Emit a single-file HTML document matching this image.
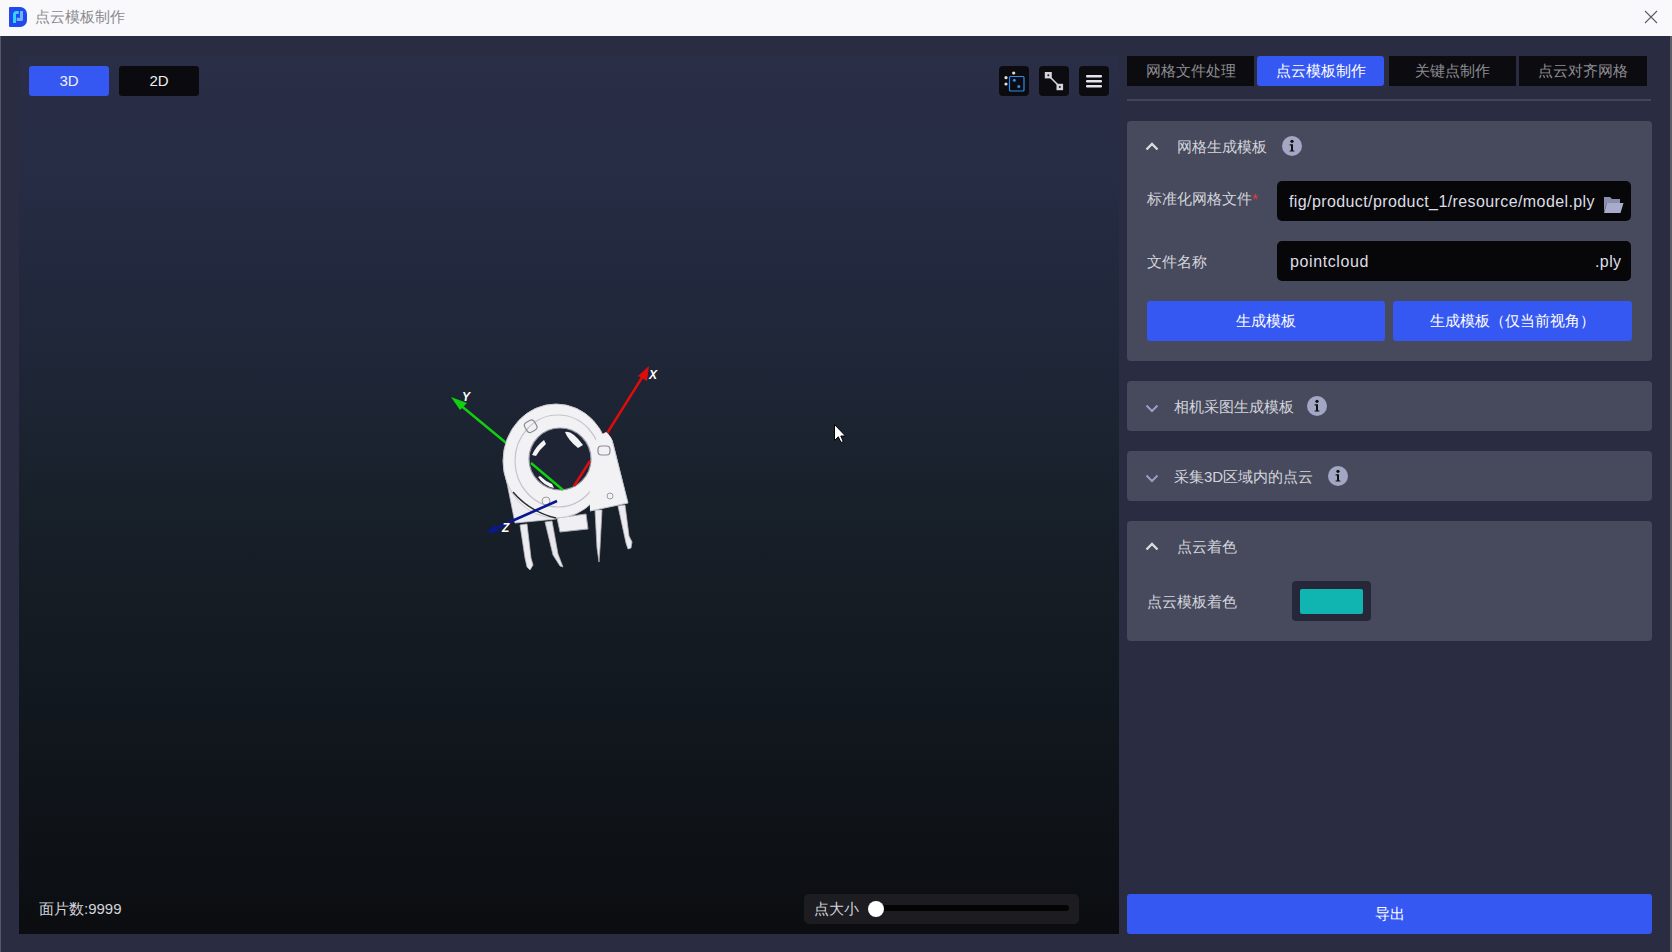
<!DOCTYPE html>
<html><head><meta charset="utf-8">
<style>
*{margin:0;padding:0;box-sizing:border-box}
html,body{width:1672px;height:952px;overflow:hidden;background:#2a2c42;font-family:"Liberation Sans",sans-serif;color:#d8d8dc}
.abs{position:absolute}
#title{left:0;top:0;width:1672px;height:36px;background:#f9f9fb}
#title .t{left:35px;top:7px;font-size:15px;color:#8a8a90;line-height:20px}
#rb{left:1670px;top:36px;width:2px;height:916px;background:#5c5f66}
#view{left:19px;top:56px;width:1100px;height:878px;background:linear-gradient(to bottom,#2a2e46 0%,#252c43 15%,#21283c 28%,#1c2432 42%,#18202a 50%,#151c24 62%,#12181f 73%,#0e1217 90%,#0b0d10 100%)}
#lb{left:0;top:36px;width:1px;height:916px;background:#55586a}
.btn{border-radius:3px;font-size:15px;text-align:center;line-height:30px;color:#f0f0f0}
.tool{width:30px;height:30px;border-radius:4px;background:#0b0b10}
.tab{top:56px;height:30px;background:#0c0c10;font-size:15px;line-height:30px;text-align:center;color:#8c8c94}
.card{left:1127px;width:525px;background:#474a5c;border-radius:4px}
.lbl{font-size:15px;color:#d4d5dc;line-height:20px;white-space:nowrap}
.inp{left:1277px;width:354px;height:40px;background:#07070a;border-radius:5px}
.itxt{font-size:16px;color:#dedee4;line-height:20px;white-space:nowrap;letter-spacing:0.4px}
.bb{background:#3658f2;color:#fff;font-size:15px;text-align:center;line-height:40px;border-radius:3px}
.info{width:20px;height:20px}
.chev{width:14px;height:9px}
</style></head><body>
<div id="title" class="abs">
  <svg class="abs" style="left:9px;top:7px" width="19" height="20" viewBox="0 0 19 20">
    <path d="M1 0H11A7 7 0 0 1 18 7V13A7 7 0 0 1 11 20H1A1 1 0 0 1 0 19V1A1 1 0 0 1 1 0Z" fill="#2248ee"/>
    <path d="M4 16V7.5A3.5 3.5 0 0 1 7.5 4H9.7V7H7V16Z" fill="#2ed2fa"/>
    <path d="M11 4H14V12.5A1.5 1.5 0 0 1 12.5 14H7.7V10.7H11Z" fill="#6ab6f2"/>
  </svg>
  <div class="t abs">点云模板制作</div>
  <svg class="abs" style="left:1644px;top:10px" width="14" height="14" viewBox="0 0 14 14"><path d="M1 1L13 13M13 1L1 13" stroke="#5a5a68" stroke-width="1.1"/></svg>
</div>
<div id="rb" class="abs"></div>
<div id="lb" class="abs"></div>
<div id="view" class="abs"></div>

<div class="abs btn" style="left:29px;top:66px;width:80px;height:30px;background:#3658f2">3D</div>
<div class="abs btn" style="left:119px;top:66px;width:80px;height:30px;background:#0b0b0f">2D</div>

<div class="abs tool" style="left:999px;top:66px">
  <svg width="30" height="30" viewBox="0 0 30 30">
    <circle cx="14.7" cy="7" r="1.6" fill="#e0e0d8"/>
    <circle cx="7" cy="11.7" r="1.6" fill="#e0e0d8"/>
    <circle cx="7" cy="18" r="1.6" fill="#e0e0d8"/>
    <rect x="10.5" y="10.5" width="14.5" height="14.5" rx="1" fill="none" stroke="#2a8ef2" stroke-width="1.2"/>
    <circle cx="15.3" cy="14.2" r="1.5" fill="#2a8ef2"/>
    <circle cx="19.8" cy="20.5" r="1.5" fill="#2a8ef2"/>
  </svg>
</div>
<div class="abs tool" style="left:1039px;top:66px">
  <svg width="30" height="30" viewBox="0 0 30 30">
    <line x1="9" y1="9" x2="21" y2="21" stroke="#d4d4dc" stroke-width="1.6"/>
    <rect x="5.8" y="6" width="7" height="6.4" fill="#d4d4dc"/>
    <rect x="17.5" y="17.8" width="6.6" height="6.4" fill="#d4d4dc"/>
    <circle cx="9.3" cy="9.2" r="1" fill="#222"/>
    <circle cx="20.8" cy="21" r="1" fill="#222"/>
  </svg>
</div>
<div class="abs tool" style="left:1079px;top:66px">
  <svg width="30" height="30" viewBox="0 0 30 30">
    <rect x="7" y="9" width="16" height="2.6" rx="1" fill="#e4e4ec"/>
    <rect x="7" y="14" width="16" height="2.6" rx="1" fill="#e4e4ec"/>
    <rect x="7" y="19" width="16" height="2.6" rx="1" fill="#e4e4ec"/>
  </svg>
</div>

<div class="abs tab" style="left:1127px;width:127px">网格文件处理</div>
<div class="abs tab" style="left:1257px;width:127px;background:#3658f2;color:#fff;border-radius:3px">点云模板制作</div>
<div class="abs tab" style="left:1389px;width:127px">关键点制作</div>
<div class="abs tab" style="left:1519px;width:128px">点云对齐网格</div>
<div class="abs" style="left:1127px;top:99px;width:524px;height:2px;background:#424757"></div>

<div class="abs card" style="top:121px;height:240px"></div>
<div class="abs card" style="top:381px;height:50px"></div>
<div class="abs card" style="top:451px;height:50px"></div>
<div class="abs card" style="top:521px;height:120px"></div>

<svg class="abs chev" style="left:1145px;top:142px" viewBox="0 0 14 9"><path d="M1.5 7.5L7 2L12.5 7.5" fill="none" stroke="#dcdce4" stroke-width="2.4"/></svg>
<div class="abs lbl" style="left:1177px;top:137px">网格生成模板</div>
<svg class="abs info" style="left:1282px;top:136px" viewBox="0 0 20 20"><circle cx="10" cy="10" r="10" fill="#a3a7c4"/><circle cx="10" cy="5.3" r="1.6" fill="#111"/><path d="M7.6 8.2H11V14.4H12.4V15.6H7.6V14.4H9V9.4H7.6Z" fill="#111"/></svg>

<div class="abs lbl" style="left:1147px;top:189px">标准化网格文件<span style="color:#e83b3b">*</span></div>
<div class="abs inp" style="top:181px"></div>
<div class="abs itxt" style="left:1289px;top:192px">fig/product/product_1/resource/model.ply</div>
<svg class="abs" style="left:1603px;top:195px" width="21" height="19" viewBox="0 0 21 19"><path d="M1 2H7L9 4H17V8H4L1 17Z" fill="#8c8fb0"/><path d="M4 8H20.5L17.5 18H1Z" fill="#a8abca"/></svg>

<div class="abs lbl" style="left:1147px;top:252px">文件名称</div>
<div class="abs inp" style="top:241px"></div>
<div class="abs itxt" style="left:1290px;top:252px;letter-spacing:0.6px">pointcloud</div>
<div class="abs itxt" style="left:1595px;top:252px">.ply</div>

<div class="abs bb" style="left:1147px;top:301px;width:238px;height:40px">生成模板</div>
<div class="abs bb" style="left:1393px;top:301px;width:239px;height:40px">生成模板（仅当前视角）</div>

<svg class="abs chev" style="left:1145px;top:404px" viewBox="0 0 14 9"><path d="M1.5 1.5L7 7L12.5 1.5" fill="none" stroke="#9a9ec2" stroke-width="2"/></svg>
<div class="abs lbl" style="left:1174px;top:397px">相机采图生成模板</div>
<svg class="abs info" style="left:1307px;top:396px" viewBox="0 0 20 20"><circle cx="10" cy="10" r="10" fill="#a3a7c4"/><circle cx="10" cy="5.3" r="1.6" fill="#111"/><path d="M7.6 8.2H11V14.4H12.4V15.6H7.6V14.4H9V9.4H7.6Z" fill="#111"/></svg>

<svg class="abs chev" style="left:1145px;top:474px" viewBox="0 0 14 9"><path d="M1.5 1.5L7 7L12.5 1.5" fill="none" stroke="#9a9ec2" stroke-width="2"/></svg>
<div class="abs lbl" style="left:1174px;top:467px">采集3D区域内的点云</div>
<svg class="abs info" style="left:1328px;top:466px" viewBox="0 0 20 20"><circle cx="10" cy="10" r="10" fill="#a3a7c4"/><circle cx="10" cy="5.3" r="1.6" fill="#111"/><path d="M7.6 8.2H11V14.4H12.4V15.6H7.6V14.4H9V9.4H7.6Z" fill="#111"/></svg>

<svg class="abs chev" style="left:1145px;top:542px" viewBox="0 0 14 9"><path d="M1.5 7.5L7 2L12.5 7.5" fill="none" stroke="#dcdce4" stroke-width="2.4"/></svg>
<div class="abs lbl" style="left:1177px;top:537px">点云着色</div>
<div class="abs lbl" style="left:1147px;top:592px">点云模板着色</div>
<div class="abs" style="left:1292px;top:581px;width:79px;height:40px;background:#262839;border-radius:4px"></div>
<div class="abs" style="left:1300px;top:589px;width:63px;height:25px;background:#10b4b0;border-radius:2px"></div>

<div class="abs bb" style="left:1127px;top:894px;width:525px;height:40px;border-radius:3px">导出</div>

<div class="abs lbl" style="left:39px;top:899px">面片数:9999</div>

<div class="abs" style="left:804px;top:894px;width:275px;height:30px;background:#1c1c21;border-radius:5px"></div>
<div class="abs lbl" style="left:814px;top:899px">点大小</div>
<div class="abs" style="left:872px;top:905px;width:197px;height:6px;background:#040405;border-radius:3px"></div>
<div class="abs" style="left:868px;top:901px;width:16px;height:16px;background:#fff;border-radius:50%"></div>

<svg class="abs" style="left:440px;top:360px" width="240" height="230" viewBox="440 360 240 230">
  <line x1="563" y1="490" x2="459" y2="404" stroke="#10d010" stroke-width="2.4"/>
  <path d="M451 397L467 403L460 410Z" fill="#10d010"/>
  <line x1="574" y1="486" x2="643" y2="376" stroke="#e00c0c" stroke-width="2.4"/>
  <path d="M649 366L647 381L638 376Z" fill="#e00c0c"/>
  <path d="M520 525L527 524L531 558L533 565L530 570L527 567L525 558Z" fill="#ececf0" stroke="#b8b8c0" stroke-width="0.8"/>
  <path d="M545 522L552 521L558 554L563 567L560 566L553 555Z" fill="#e8e8ec" stroke="#b0b0b8" stroke-width="0.8"/>
  <path d="M595 510L602 510L600 548L599 562L597 548Z" fill="#ececf0" stroke="#b0b0b8" stroke-width="0.8"/>
  <path d="M618 506L625 505L629 536L632 542L631 548L628 549L626 543Z" fill="#ececf0" stroke="#b8b8c0" stroke-width="0.8"/>
  <path d="M506 478L515 523L556 519L552 492Z" fill="#eeeef2" stroke="#c0c0c8" stroke-width="0.8"/>
  <path d="M557 518L586 514L588 529L560 532Z" fill="#f0f0f4" stroke="#a8a8b0" stroke-width="1"/>
  <ellipse cx="556" cy="461" rx="53" ry="57" fill="#f2f2f5" stroke="#c8c8d0" stroke-width="1"/>
  <ellipse cx="558" cy="461" rx="43" ry="46" fill="none" stroke="#c4c4cc" stroke-width="1.2"/>
  <path d="M513 492Q530 512 556 518" fill="none" stroke="#2a2a30" stroke-width="1.4"/>
  <path d="M589 450Q596 436 606 432Q612 436 614 446L628 503L590 511Z" fill="#f2f2f5"/>
  <path d="M612 440L628 503L590 511" fill="none" stroke="#c4c4cc" stroke-width="1"/>
  <circle cx="560" cy="459" r="31" fill="#1f2434" stroke="#9a9aa4" stroke-width="1.2"/>
  <path d="M565 432Q572 430 583 445L578 448Q568 440 565 432Z" fill="#f4f4f6"/>
  <path d="M544 440Q536 446 532 455L536 456Q540 449 546 444Z" fill="#f4f4f6"/>
  <path d="M538 477Q544 486 554 488L552 484Q545 481 540 476Z" fill="#f4f4f6"/>
  <rect x="598" y="446" width="12" height="9" rx="3.5" fill="none" stroke="#8c8c96" stroke-width="1.2"/>
  <rect x="525" y="421" width="11" height="11" rx="3.5" fill="none" stroke="#8c8c96" stroke-width="1.2" transform="rotate(-30 530 426)"/>
  <circle cx="610" cy="496" r="3" fill="none" stroke="#9a9aa4" stroke-width="1"/>
  <circle cx="546" cy="501" r="4" fill="none" stroke="#9a9aa4" stroke-width="1"/>
  <line x1="563" y1="490" x2="531" y2="463" stroke="#10d010" stroke-width="2.4"/>
  <line x1="574" y1="486" x2="590" y2="461" stroke="#e00c0c" stroke-width="2.4"/>
  <line x1="557" y1="501" x2="494" y2="529" stroke="#0a1890" stroke-width="2.6"/>
  <path d="M486 533L495 525L499 532Z" fill="#0a1890"/>
  <text x="462" y="401" font-family="Liberation Sans" font-style="italic" font-weight="bold" font-size="12" fill="#fff">Y</text>
  <text x="649" y="379" font-family="Liberation Sans" font-style="italic" font-weight="bold" font-size="12" fill="#fff">X</text>
  <text x="502" y="532" font-family="Liberation Sans" font-style="italic" font-weight="bold" font-size="12" fill="#fff">Z</text>
</svg>

<svg class="abs" style="left:834px;top:424px" width="13" height="19" viewBox="0 0 13 19"><path d="M0.5 0.5V16.5L4.3 12.8L7 18.5L9.3 17.5L6.8 12H11.5Z" fill="#fff" stroke="#000" stroke-width="1"/></svg>
</body></html>
